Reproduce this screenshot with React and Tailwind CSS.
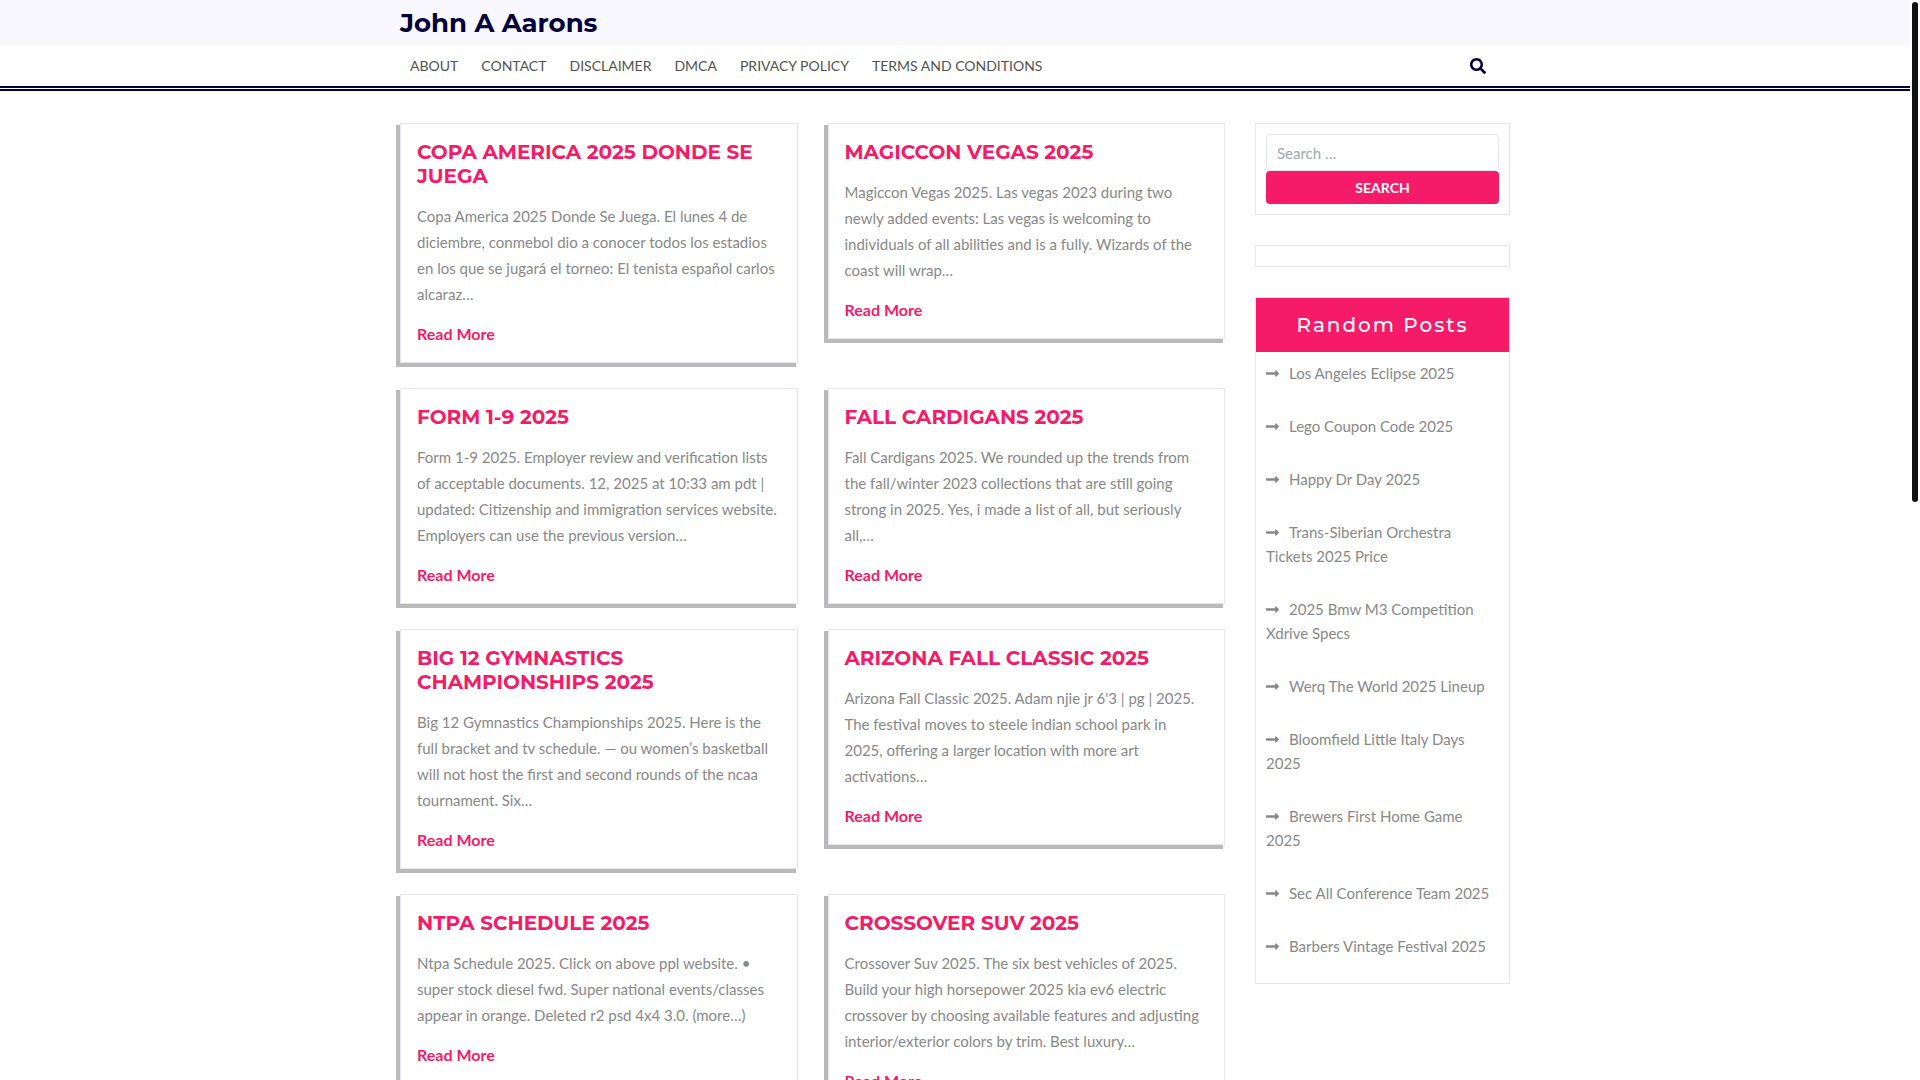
import React, { useState } from "react";
import { FaSearch, FaLongArrowAltRight } from "react-icons/fa";

const navLinks = [
  "About",
  "Contact",
  "Disclaimer",
  "DMCA",
  "Privacy Policy",
  "Terms And Conditions",
];

const posts = [
  {
    title: "Copa America 2025 Donde Se Juega",
    excerpt:
      "Copa America 2025 Donde Se Juega. El lunes 4 de diciembre, conmebol dio a conocer todos los estadios en los que se jugará el torneo: El tenista español carlos alcaraz…",
  },
  {
    title: "Magiccon Vegas 2025",
    excerpt:
      "Magiccon Vegas 2025. Las vegas 2023 during two newly added events: Las vegas is welcoming to individuals of all abilities and is a fully. Wizards of the coast will wrap…",
  },
  {
    title: "Form 1-9 2025",
    excerpt:
      "Form 1-9 2025. Employer review and verification lists of acceptable documents. 12, 2025 at 10:33 am pdt | updated: Citizenship and immigration services website. Employers can use the previous version…",
  },
  {
    title: "Fall Cardigans 2025",
    excerpt:
      "Fall Cardigans 2025. We rounded up the trends from the fall/winter 2023 collections that are still going strong in 2025. Yes, i made a list of all, but seriously all,…",
  },
  {
    title: "Big 12 Gymnastics Championships 2025",
    excerpt:
      "Big 12 Gymnastics Championships 2025. Here is the full bracket and tv schedule. — ou women’s basketball will not host the first and second rounds of the ncaa tournament. Six…",
  },
  {
    title: "Arizona Fall Classic 2025",
    excerpt:
      "Arizona Fall Classic 2025. Adam njie jr 6'3 | pg | 2025. The festival moves to steele indian school park in 2025, offering a larger location with more art activations…",
  },
  {
    title: "Ntpa Schedule 2025",
    excerpt:
      "Ntpa Schedule 2025. Click on above ppl website. • super stock diesel fwd. Super national events/classes appear in orange. Deleted r2 psd 4x4 3.0. (more…)",
  },
  {
    title: "Crossover Suv 2025",
    excerpt:
      "Crossover Suv 2025. The six best vehicles of 2025. Build your high horsepower 2025 kia ev6 electric crossover by choosing available features and adjusting interior/exterior colors by trim. Best luxury…",
  },
];

const randomPosts = [
  "Los Angeles Eclipse 2025",
  "Lego Coupon Code 2025",
  "Happy Dr Day 2025",
  "Trans-Siberian Orchestra Tickets 2025 Price",
  "2025 Bmw M3 Competition Xdrive Specs",
  "Werq The World 2025 Lineup",
  "Bloomfield Little Italy Days 2025",
  "Brewers First Home Game 2025",
  "Sec All Conference Team 2025",
  "Barbers Vintage Festival 2025",
];

function Header() {
  return (
    <header>
      <div className="bg-[#f9f8fe]">
        <div className="max-w-[1110px] mx-auto h-[46px] flex items-center">
          <h1 className="font-[Montserrat,Inter,sans-serif] text-[26px] leading-8 font-bold text-[#02003d]">
            <a href="#home">John A Aarons</a>
          </h1>
        </div>
      </div>
      <div className="bg-white border-b-[5px] border-double border-[#02003d]">
        <div className="max-w-[1110px] mx-auto h-10 flex items-center justify-between">
          <nav className="flex gap-[23px] pl-[10px] text-[14px] leading-5 uppercase text-[#525252]">
            {navLinks.map((link) => (
              <a key={link} href="#page">
                {link}
              </a>
            ))}
          </nav>
          <button
            type="button"
            aria-label="Open search"
            className="mr-6 text-[16px] text-[#02003d]"
          >
            <FaSearch />
          </button>
        </div>
      </div>
    </header>
  );
}

function PostCard({ post }) {
  return (
    <article className="bg-white border border-[#e6e6ee] shadow-[-3px_3px_0_1px_#bababa] p-4">
      <h2 className="font-[Montserrat,Inter,sans-serif] text-[20px] leading-6 font-bold uppercase text-[#f51b68]">
        <a href="#post">{post.title}</a>
      </h2>
      <p className="mt-[15px] text-[15px] leading-[26px] text-[#888]">
        {post.excerpt}
      </p>
      <a
        href="#post"
        className="block mt-[14px] text-[16px] leading-[25px] font-bold text-[#f51b68]"
      >
        Read More
      </a>
    </article>
  );
}

function Sidebar() {
  const [query, setQuery] = useState("");

  return (
    <aside className="w-[255px] shrink-0 flex flex-col gap-[30px]">
      <form
        className="border border-[#e6e6ee] p-[10px]"
        onSubmit={(e) => e.preventDefault()}
      >
        <label htmlFor="search" className="sr-only">
          Search for:
        </label>
        <input
          id="search"
          type="search"
          placeholder="Search …"
          value={query}
          onChange={(e) => setQuery(e.target.value)}
          className="block w-full h-[37px] px-[10px] border border-[#e6e6ee] rounded text-[15px] placeholder:text-[#9aaba8]"
        />
        <button
          type="submit"
          className="block w-full h-[33px] rounded bg-[#f51b68] text-[14px] font-bold uppercase text-white"
        >
          Search
        </button>
      </form>

      <div className="border border-[#e6e6ee] p-[10px]" />

      <section className="border border-[#e6e6ee]">
        <h3 className="font-[Montserrat,Inter,sans-serif] h-[54px] flex items-center justify-center bg-[#f51b68] text-[20px] font-medium tracking-[2px] text-white">
          Random Posts
        </h3>
        <ul className="flex flex-col gap-[29px] px-[10px] pt-[9px] pb-[25px] text-[15px] leading-6 text-[#888]">
          {randomPosts.map((title) => (
            <li key={title}>
              <FaLongArrowAltRight className="inline-block mr-[10px] w-[13px] h-[15px] align-[-2px]" />
              <a href="#post">{title}</a>
            </li>
          ))}
        </ul>
      </section>
    </aside>
  );
}

export default function App() {
  return (
    <div className="h-screen overflow-y-auto [scrollbar-width:none] bg-white font-[Lato,sans-serif]">
      <div className="mr-[10px]">
        <Header />
        <div className="max-w-[1110px] mx-auto mt-8 mb-10 flex items-start gap-[30px]">
          <main className="flex-1 grid grid-cols-2 items-start gap-x-[30px] gap-y-[25px]">
            {posts.map((post) => (
              <PostCard key={post.title} post={post} />
            ))}
          </main>
          <Sidebar />
        </div>
      </div>

      {/* scroll thumb */}
      <div className="fixed top-[2px] right-[2px] w-[6px] h-[500px] rounded-full bg-[#111]" />
    </div>
  );
}
